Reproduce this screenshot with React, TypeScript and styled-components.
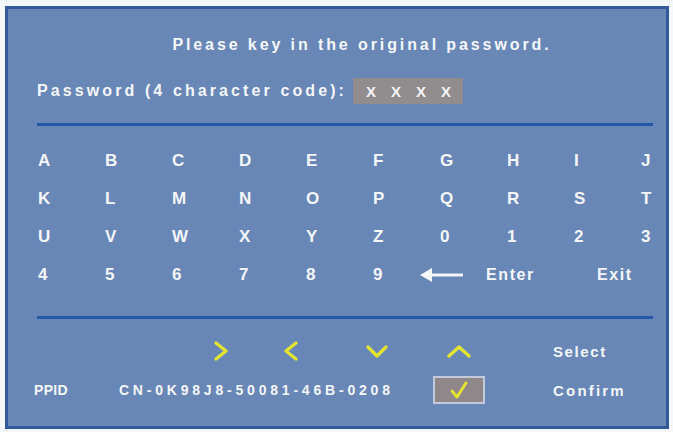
import styled, { createGlobalStyle } from "styled-components";

const GlobalStyle = createGlobalStyle`
  html, body {
    margin: 0;
    padding: 0;
    background: #f3f7fa;
  }
  body {
    font-family: "Liberation Sans", Arial, sans-serif;
  }
`;

const YELLOW = "#e2e332";

const Panel = styled.div`
  box-sizing: border-box;
  width: 664px;
  height: 423px;
  margin: 6px 0 0 5px;
  border: 3px solid #33599a;
  background: #6887b7;
  color: #f4f6f8;
  font-weight: 700;
  display: flex;
  flex-direction: column;
`;

const Title = styled.div`
  margin-top: 27px;
  text-align: center;
  font-size: 16px;
  line-height: 18px;
  letter-spacing: 2.9px;
  padding-left: 50px;
`;

const PasswordRow = styled.div`
  display: flex;
  align-items: center;
  margin: 24px 0 0 29px;
  height: 26px;
`;

const Label = styled.span`
  font-size: 16px;
  letter-spacing: 3.1px;
`;

const CodeBox = styled.div`
  display: flex;
  align-items: center;
  gap: 15px;
  height: 26px;
  width: 110px;
  box-sizing: border-box;
  padding-left: 13px;
  margin-left: 6px;
  background: #918c8d;
  font-size: 15px;
`;

const Divider = styled.div`
  height: 3px;
  margin: ${(p: { $top: number }) => p.$top}px 13px 0 29px;
  background: #2458a4;
`;

const Keyboard = styled.div`
  display: grid;
  grid-template-columns: repeat(9, 67px) 1fr;
  grid-auto-rows: 38px;
  align-items: center;
  margin: 16px 0 0 30px;
  font-size: 17px;
`;

const Key = styled.span`
  letter-spacing: 0;
`;

const CommandKeys = styled.div`
  grid-column: 7 / -1;
  display: flex;
  align-items: center;
  margin-left: -20px;
`;

const Word = styled.span`
  font-size: 16px;
  letter-spacing: 1.6px;
  margin-left: ${(p: { $gap: number }) => p.$gap}px;
`;

const Footer = styled.div`
  display: grid;
  grid-template-columns: 399px 52px auto;
  grid-template-rows: 24px 28px;
  row-gap: 13px;
  align-items: center;
  margin: 20px 0 0 26px;
`;

const NavArrows = styled.div`
  display: flex;
  align-items: center;
  padding-left: 179px;
`;

const NavCell = styled.div`
  display: flex;
  justify-content: center;
  align-items: center;
`;

const Hint = styled.span`
  padding-left: 68px;
  font-size: 15px;
  letter-spacing: ${(p: { $spacing: number }) => p.$spacing}px;
`;

const Ppid = styled.div`
  display: flex;
  align-items: center;
  font-size: 14px;
  letter-spacing: 0.3px;
`;

const Serial = styled.span`
  margin-left: 51px;
  letter-spacing: 3.8px;
`;

const CheckBox = styled.div`
  box-sizing: border-box;
  height: 28px;
  border: 2px solid #c3cadb;
  background: #8f8789;
  display: flex;
  align-items: center;
  justify-content: center;
`;

const Chevron = ({ dir, gap }: { dir: "right" | "left" | "down" | "up"; gap?: number }) => {
  const paths = {
    right: { w: 16, h: 20, d: "M3 2 L13 10 L3 18" },
    left: { w: 16, h: 20, d: "M13 2 L3 10 L13 18" },
    down: { w: 22, h: 14, d: "M2 3 L11 12 L20 3" },
    up: { w: 24, h: 14, d: "M2 12 L12 3 L22 12" },
  }[dir];
  return (
    <svg
      width={paths.w}
      height={paths.h}
      viewBox={`0 0 ${paths.w} ${paths.h}`}
      style={{ marginLeft: gap ?? 0 }}
    >
      <path d={paths.d} fill="none" stroke={YELLOW} strokeWidth={3.4} strokeLinecap="round" strokeLinejoin="round" />
    </svg>
  );
};

const BackArrow = () => (
  <svg width="43" height="16" viewBox="0 0 43 16">
    <path d="M0 8 L12 1 L12 15 Z" fill="#f4f6f8" />
    <rect x="10" y="6.5" width="33" height="3" fill="#f4f6f8" />
  </svg>
);

const Tick = () => (
  <svg width="20" height="20" viewBox="0 0 20 20">
    <path d="M3 11 L8 17 L17 3" fill="none" stroke={YELLOW} strokeWidth={3} strokeLinecap="round" strokeLinejoin="round" />
  </svg>
);

const rows = ["ABCDEFGHIJ", "KLMNOPQRST", "UVWXYZ0123", "456789"];

export default function App() {
  return (
    <>
      <GlobalStyle />
      <Panel>
        <Title>Please key in the original password.</Title>
        <PasswordRow>
          <Label>Password (4 character code):</Label>
          <CodeBox>
            {["X", "X", "X", "X"].map((c, i) => (
              <span key={i}>{c}</span>
            ))}
          </CodeBox>
        </PasswordRow>
        <Divider $top={19} />
        <Keyboard>
          {rows.map((row) =>
            row.split("").map((ch) => <Key key={row + ch}>{ch}</Key>)
          )}
          <CommandKeys>
            <BackArrow />
            <Word $gap={23}>Enter</Word>
            <Word $gap={62}>Exit</Word>
          </CommandKeys>
        </Keyboard>
        <Divider $top={22} />
        <Footer>
          <NavArrows>
            <Chevron dir="right" />
            <Chevron dir="left" gap={54} />
            <Chevron dir="down" gap={67} />
          </NavArrows>
          <NavCell>
            <Chevron dir="up" />
          </NavCell>
          <Hint $spacing={1.6}>Select</Hint>
          <Ppid>
            PPID
            <Serial>CN-0K98J8-50081-46B-0208</Serial>
          </Ppid>
          <CheckBox>
            <Tick />
          </CheckBox>
          <Hint $spacing={2.2}>Confirm</Hint>
        </Footer>
      </Panel>
    </>
  );
}
